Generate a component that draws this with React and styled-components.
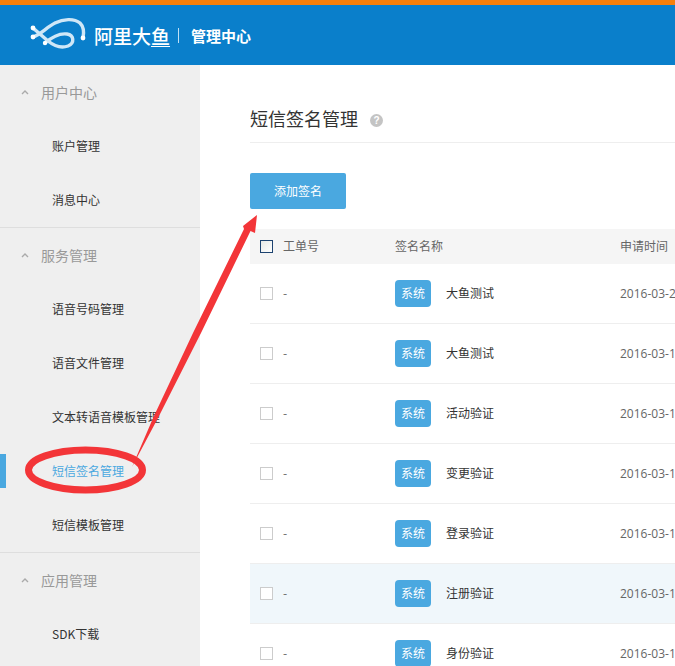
import React from 'react';
import styled, { createGlobalStyle } from 'styled-components';

const GlobalStyle = createGlobalStyle`
  html, body {
    margin: 0;
    padding: 0;
    height: 100%;
    overflow: hidden;
    background: #fff;
  }
  body {
    font-family: "Noto Sans CJK SC", "Open Sans", sans-serif;
    font-size: 12px;
    color: #333;
  }
  * { box-sizing: border-box; }
`;

const Page = styled.div`
  position: relative;
  width: 675px;
  height: 666px;
  overflow: hidden;
`;

const Header = styled.header`
  height: 65px;
  background: #0a7fcb;
  border-top: 5px solid #f77f0a;
  display: flex;
  align-items: center;
  padding-left: 30px;
  color: #fff;
`;

const BrandName = styled.span`
  margin-left: 4px;
  font-size: 19px;
  font-weight: 500;
`;

const BrandFish = styled.span`
  text-decoration: underline;
  text-decoration-thickness: 1px;
  text-underline-offset: 2px;
`;

const BrandLine = styled.span`
  width: 1px;
  height: 15px;
  margin: 0 12px 0 8px;
  background: #bfe0f5;
`;

const BrandSub = styled.span`
  font-size: 15px;
  font-weight: 700;
`;

const Body = styled.div`
  display: flex;
  height: 601px;
`;

const Sidebar = styled.aside`
  width: 200px;
  flex: none;
  background: #efefef;
`;

const Section = styled.section`
  border-bottom: 1px solid #dedede;
  &:last-child { border-bottom: 0; }
`;

const SectionTitle = styled.div`
  height: 54px;
  display: flex;
  align-items: center;
  padding-left: 21px;
  gap: 12px;
  font-size: 14px;
  color: #999;
`;

const NavItem = styled.div`
  position: relative;
  height: 54px;
  display: flex;
  align-items: center;
  padding: 0 0 2px 52px;
  font-size: 12px;
  white-space: nowrap;
  color: ${p => (p.$active ? '#4aa8e0' : '#333')};
  ${p => p.$active && `
    &::before {
      content: '';
      position: absolute;
      left: 0;
      top: 10px;
      width: 6px;
      height: 34px;
      background: #4aa8e0;
    }
  `}
`;

const Main = styled.main`
  flex: 1;
  min-width: 0;
  padding: 36px 0 0 50px;
`;

const TitleRow = styled.div`
  height: 42px;
  display: flex;
  align-items: flex-start;
  gap: 12px;
  border-bottom: 1px solid #eee;
`;

const Title = styled.h1`
  margin: -1px 0 0;
  font-size: 18px;
  font-weight: 400;
  line-height: 36px;
  color: #333;
`;

const Help = styled.span`
  width: 13px;
  height: 13px;
  margin-top: 13px;
  border-radius: 50%;
  background: #c4c4c4;
  color: #fff;
  font-family: "Liberation Sans", sans-serif;
  font-size: 10px;
  font-weight: 700;
  line-height: 13px;
  text-align: center;
`;

const AddButton = styled.button`
  display: block;
  width: 96px;
  height: 36px;
  margin: 30px 0 20px;
  padding: 0 0 2px;
  border: 0;
  border-radius: 2px;
  background: #4aa8e0;
  color: #fff;
  font-family: inherit;
  font-size: 12px;
`;

const Table = styled.div`
  width: 700px;
`;

const Row = styled.div`
  display: grid;
  grid-template-columns: 23px 112px 225px 1fr;
  align-items: center;
  height: 60px;
  padding-left: 10px;
  background: ${p => (p.$hl ? '#f0f7fb' : '#fff')};
  border-bottom: 1px solid #eee;
  color: #666;
`;

const HeadRow = styled(Row)`
  height: 35px;
  background: #f5f5f5;
  border-bottom: 0;
`;

const RowText = styled.div`
  margin-top: -2px;
`;

const Check = styled.span`
  display: block;
  width: 13px;
  height: 13px;
  border: 1px solid ${p => (p.$head ? '#1d4370' : '#ccc')};
  background: ${p => (p.$head ? 'linear-gradient(135deg, #e6e9e6, #fff)' : '#fff')};
`;

const NameCell = styled.div`
  display: flex;
  align-items: center;
  gap: 15px;
  color: #333;
`;

const NameText = styled.span`
  margin-top: -2px;
`;

const Tag = styled.span`
  width: 36px;
  height: 27px;
  margin-top: -1px;
  border-radius: 4px;
  background: #4aa8e0;
  color: #fff;
  line-height: 26px;
  text-align: center;
`;

const DateCell = styled.div`
  font-family: "Open Sans", sans-serif;
  white-space: nowrap;
`;

const Overlay = styled.svg`
  position: absolute;
  left: 0;
  top: 0;
  pointer-events: none;
`;

const Logo = () => (
  <svg width="60" height="36" viewBox="0 0 60 36" fill="none" strokeLinecap="round">
    <path d="M15 26 C22 20 30 16 37 17 C44 18 45 26 38 29 C30 32 23 28 18 24 L3 11" stroke="#cfe7f7" strokeWidth="3.4" />
    <path d="M3 20 C10 18 17 10 25 6 C33 2 44 1 50 6 C54 10 54 16 53 21" stroke="#cfe7f7" strokeWidth="3.4" />
    <circle cx="53" cy="21" r="2.4" fill="#fff" />
    <circle cx="3" cy="11" r="2.4" fill="#fff" />
    <circle cx="3" cy="20" r="2.4" fill="#fff" />
    <circle cx="15" cy="26" r="2.2" fill="#fff" />
  </svg>
);

const Chevron = () => (
  <svg width="8" height="6" viewBox="0 0 8 6" fill="none">
    <path d="M1 5 L4 2 L7 5" stroke="#aaa" strokeWidth="1.4" />
  </svg>
);

const nav = [
  { title: '用户中心', items: ['账户管理', '消息中心'] },
  { title: '服务管理', items: ['语音号码管理', '语音文件管理', '文本转语音模板管理', '短信签名管理', '短信模板管理'] },
  { title: '应用管理', items: ['SDK下载'] },
];

const rows = [
  { name: '大鱼测试', date: '2016-03-2' },
  { name: '大鱼测试', date: '2016-03-1' },
  { name: '活动验证', date: '2016-03-1' },
  { name: '变更验证', date: '2016-03-1' },
  { name: '登录验证', date: '2016-03-1' },
  { name: '注册验证', date: '2016-03-1', hl: true },
  { name: '身份验证', date: '2016-03-1' },
];

export default function App() {
  return (
    <Page>
      <GlobalStyle />
      <Header>
        <Logo />
        <BrandName>阿里大<BrandFish>鱼</BrandFish></BrandName>
        <BrandLine />
        <BrandSub>管理中心</BrandSub>
      </Header>
      <Body>
        <Sidebar>
          {nav.map(s => (
            <Section key={s.title}>
              <SectionTitle><Chevron />{s.title}</SectionTitle>
              {s.items.map(i => (
                <NavItem key={i} $active={i === '短信签名管理'}>{i}</NavItem>
              ))}
            </Section>
          ))}
        </Sidebar>
        <Main>
          <TitleRow>
            <Title>短信签名管理</Title>
            <Help>?</Help>
          </TitleRow>
          <AddButton>添加签名</AddButton>
          <Table>
            <HeadRow>
              <Check $head />
              <RowText>工单号</RowText>
              <RowText>签名名称</RowText>
              <RowText>申请时间</RowText>
            </HeadRow>
            {rows.map((r, i) => (
              <Row key={i} $hl={r.hl}>
                <Check />
                <RowText>-</RowText>
                <NameCell><Tag>系统</Tag><NameText>{r.name}</NameText></NameCell>
                <DateCell>{r.date}</DateCell>
              </Row>
            ))}
          </Table>
        </Main>
      </Body>
      <Overlay width="675" height="666" viewBox="0 0 675 666">
        <ellipse cx="85.5" cy="470" rx="57" ry="20" fill="none" stroke="#f33538" strokeWidth="7" />
        <polygon points="132,467 153.5,417 193,333 244,229 243,226 257,215 255,233 250.5,231 201,333 158.5,417" fill="#f33538" />
      </Overlay>
    </Page>
  );
}
